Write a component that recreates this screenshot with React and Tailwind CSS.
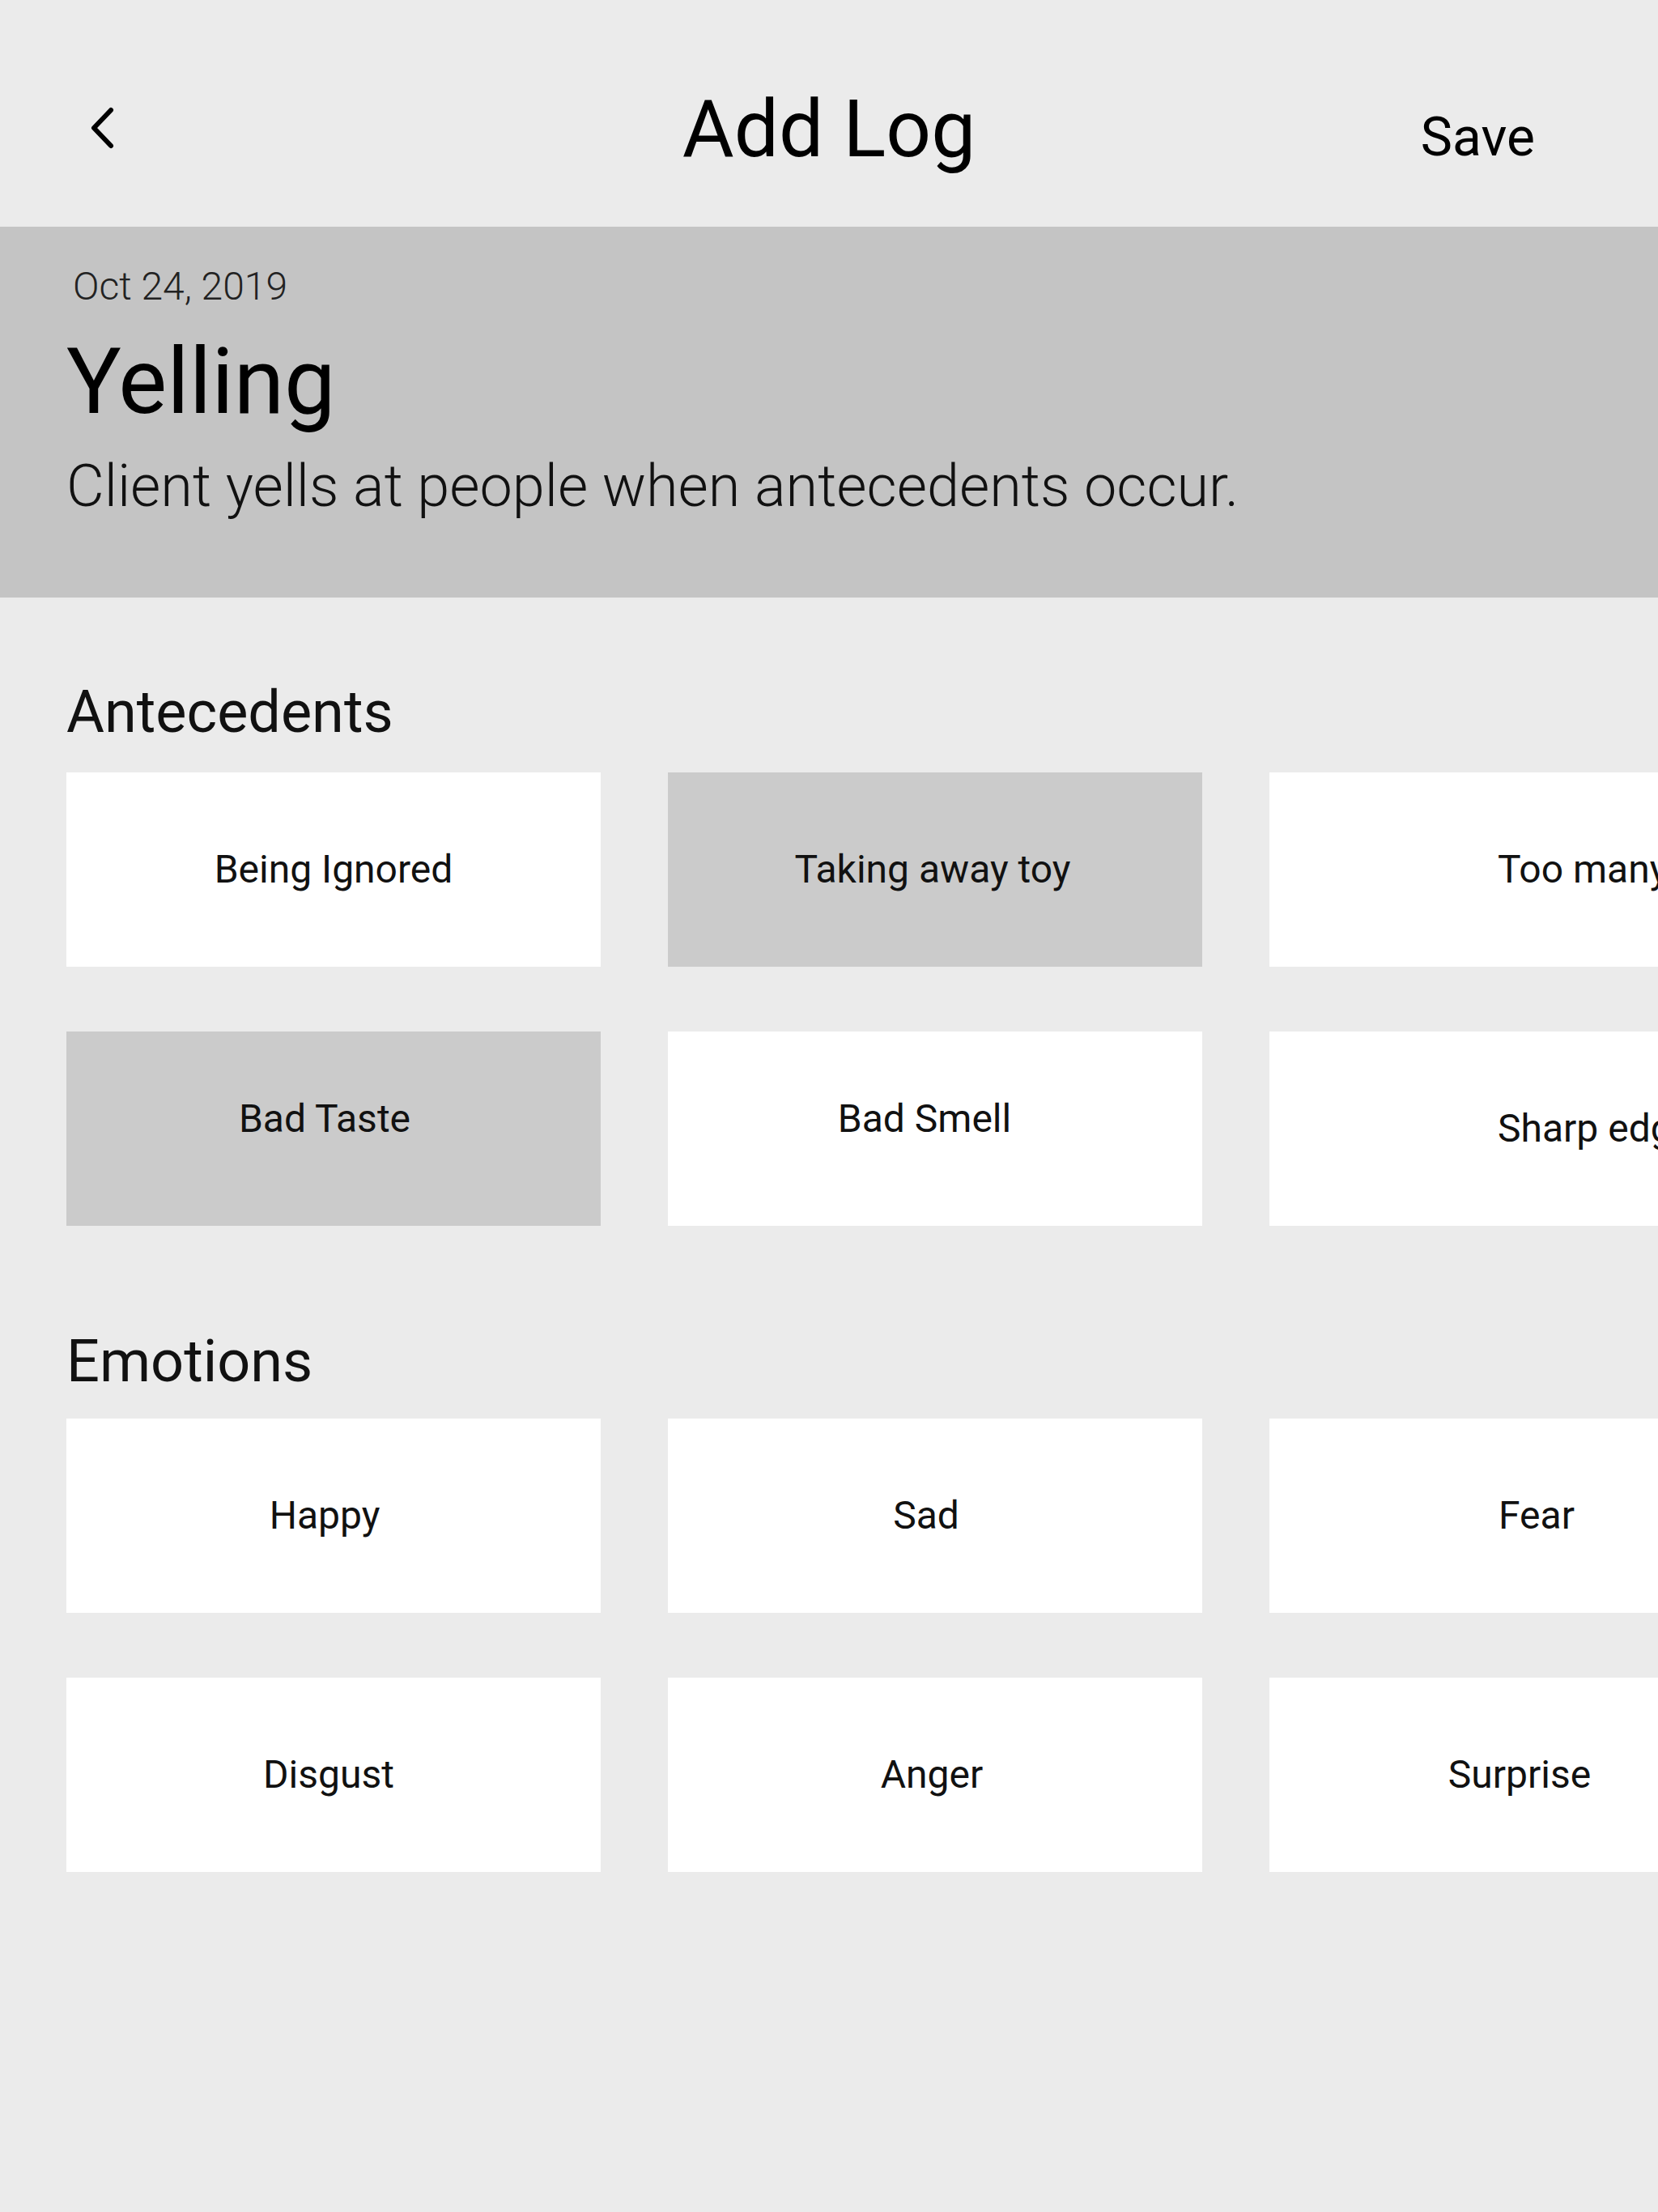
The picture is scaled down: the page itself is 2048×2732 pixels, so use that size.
const antecedents = [
    { label: "Being Ignored" },
    { label: "Taking away toy", selected: true, shift: "pr-[6px]" },
    { label: "Too many people", clipped: true },
    { label: "Bad Taste", selected: true, lift: true, shift: "pr-[22px]" },
    { label: "Bad Smell", lift: true, shift: "pr-[26px]" },
    { label: "Sharp edges", clipped: true },
];

const emotions = [
    { label: "Happy", shift: "pr-[22px]" },
    { label: "Sad", shift: "pr-[22px]" },
    { label: "Fear" },
    { label: "Disgust", shift: "pr-[12px]" },
    { label: "Anger", shift: "pr-[8px]" },
    { label: "Surprise", shift: "pr-[42px]" },
];

// ─── Back chevron ───────────────────────────────────────────────────────────
function BackIcon() {
    return (
        <svg width="50" height="60" viewBox="0 0 50 60" className="block">
            <polyline
                points="37,8 16,30 37,52"
                fill="none"
                stroke="#000"
                strokeWidth="6"
                strokeLinecap="round"
                strokeLinejoin="round"
            />
        </svg>
    );
}

function OptionCard({ label, selected, clipped, lift, shift }) {
    return (
        <div
            className={`h-[240px] flex items-center whitespace-nowrap overflow-hidden ${selected ? "bg-[#cbcbcb]" : "bg-white"
                } ${clipped ? "justify-start pl-[282px]" : "justify-center"} ${lift ? "pb-[24px]" : ""} ${shift || ""}`}
        >
            <span className="text-[48px] leading-none text-[#111]">{label}</span>
        </div>
    );
}

function Section({ title, items, top, gap }) {
    return (
        <section className={top}>
            <h2 className="text-[72px] leading-none text-[#111] pl-[82px]">{title}</h2>
            <div className={`grid grid-cols-[660px_660px_660px] gap-x-[83px] gap-y-[80px] pl-[82px] ${gap}`}>
                {items.map((it) => (
                    <OptionCard key={it.label} {...it} />
                ))}
            </div>
        </section>
    );
}

export default function App() {
    return (
        <div
            className="w-[2048px] h-[2732px] overflow-hidden bg-[#ebebeb] text-black"
            style={{ fontFamily: "Roboto, 'Noto Sans', sans-serif" }}
        >
            {/* Encabezado */}
            <header className="h-[280px] grid grid-cols-[1fr_auto_1fr]">
                <div className="pl-[100px] pt-[128px]">
                    <BackIcon />
                </div>
                <h1 className="text-[98px] leading-none pt-[111px]">Add Log</h1>
                <div className="flex justify-end pr-[152px] pt-[137px]">
                    <span className="text-[66px] leading-none">Save</span>
                </div>
            </header>

            {/* Resumen del comportamiento */}
            <div className="h-[458px] bg-[#c4c4c4] pl-[82px] pt-[50px]">
                <p className="text-[48px] leading-none font-light text-[#222] ml-[8px]">Oct 24, 2019</p>
                <p className="text-[113px] leading-none mt-[37px]">Yelling</p>
                <p className="text-[72px] leading-none font-light text-[#111] mt-[37px]">
                    Client yells at people when antecedents occur.
                </p>
            </div>

            <Section title="Antecedents" items={antecedents} top="mt-[106px]" gap="mt-[38px]" />
            <Section title="Emotions" items={emotions} top="mt-[132px]" gap="mt-[34px]" />
        </div>
    );
}
